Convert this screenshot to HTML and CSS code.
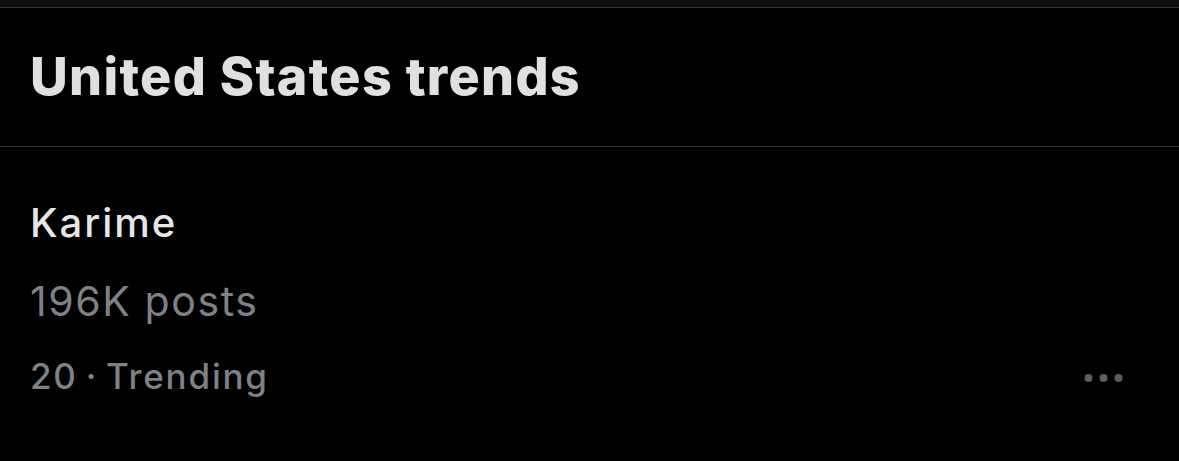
FILE: index.html
```html
<!DOCTYPE html>
<html lang="en">
<head>
<meta charset="utf-8">
<title>United States trends</title>
<link rel="stylesheet" href="styles.css">
</head>
<body>
<div class="topbar"></div>
<header class="header">
  <h1 class="title">United States trends</h1>
</header>
<section class="trend">
  <div class="trend-name">Karime</div>
  <div class="trend-posts">196K posts</div>
  <div class="trend-meta">
    <span class="trend-rank">20&thinsp;·&thinsp;Trending</span>
    <svg class="more" width="40" height="10" viewBox="0 0 40 10" aria-hidden="true">
      <circle cx="4.5" cy="5" r="4"/>
      <circle cx="19.5" cy="5" r="4"/>
      <circle cx="34.5" cy="5" r="4"/>
    </svg>
  </div>
</section>
</body>
</html>
```
FILE: styles.css
```css
html, body {
  margin: 0;
  padding: 0;
  background: #000;
}
body {
  font-family: Inter, "Noto Sans", "Liberation Sans", sans-serif;
  color: #e7e7e7;
  width: 1179px;
  height: 461px;
  overflow: hidden;
}
.topbar {
  height: 7px;
  background: #0e0e0e;
  border-bottom: 1px solid #333333;
}
.header {
  height: 138px;
  border-bottom: 1px solid #363636;
  display: flex;
  align-items: center;
  padding-left: 30px;
}
.title {
  margin: 0;
  font-size: 52px;
  font-weight: 800;
  line-height: 60px;
  color: #e0e0e0;
  letter-spacing: 1.3px;
}
.trend {
  padding: 54px 55px 0 30px;
}
.trend-name {
  font-size: 40px;
  font-weight: 500;
  line-height: 44px;
  letter-spacing: 2px;
  color: #e6e6e6;
}
.trend-posts {
  margin-top: 34px;
  font-size: 41px;
  font-weight: 400;
  line-height: 44px;
  letter-spacing: 1.6px;
  color: #7e8186;
}
.trend-meta {
  margin-top: 31px;
  display: flex;
  justify-content: space-between;
  align-items: center;
  height: 44px;
}
.trend-rank {
  font-size: 35px;
  font-weight: 500;
  line-height: 44px;
  letter-spacing: 1.8px;
  color: #7e8186;
}
.more {
  fill: #5c5e62;
  margin-top: 4px;
}
```
